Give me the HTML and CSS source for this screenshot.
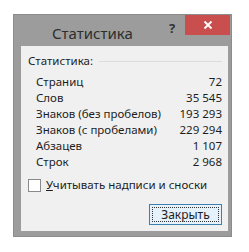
FILE: index.html
```html
<!DOCTYPE html>
<html lang="ru">
<head>
    <meta charset="utf-8">
    <title>Статистика</title>
    <link rel="stylesheet" href="styles.css">
</head>
<body>
    <div class="window">
        <!-- Заголовок окна -->
        <div class="titlebar">
            <span class="title">Статистика</span>
            <span class="help">?</span>
            <span class="close">
                <svg width="10" height="10" viewBox="0 0 10 10">
                    <path d="M1.5 1.5 L8.5 8.5 M8.5 1.5 L1.5 8.5" stroke="#fff" stroke-width="1.8"/>
                </svg>
            </span>
        </div>

        <!-- Содержимое -->
        <div class="panel">
            <div class="group-title">
                <span>Статистика:</span>
                <span class="line"></span>
            </div>

            <div class="stats">
                <div class="row"><span>Страниц</span><span>72</span></div>
                <div class="row"><span>Слов</span><span>35 545</span></div>
                <div class="row"><span>Знаков (без пробелов)</span><span>193 293</span></div>
                <div class="row"><span>Знаков (с пробелами)</span><span>229 294</span></div>
                <div class="row"><span>Абзацев</span><span>1 107</span></div>
                <div class="row"><span>Строк</span><span>2 968</span></div>
            </div>

            <label class="check">
                <span class="box"></span>
                <span><u>У</u>читывать надписи и сноски</span>
            </label>

            <div class="buttons">
                <button class="btn">Закрыть</button>
            </div>
        </div>
    </div>
</body>
</html>
```

FILE: styles.css
```css
* {
    margin: 0;
    padding: 0;
    box-sizing: border-box;
}

body {
    background-color: #ffffff;
    font-family: "Noto Sans", "Open Sans", sans-serif;
    font-size: 11.5px;
    color: #1e1e1e;
}

/* Окно */
.window {
    margin: 14px 0 0 13px;
    width: 219px;
    height: 223px;
    background-color: #9c9c9c;
    border: 1px solid #8c8c8c;
    display: flex;
    flex-direction: column;
}

.titlebar {
    height: 31px;
    display: flex;
    align-items: flex-start;
}

.title {
    margin: 8px 0 0 38px;
    font-size: 15px;
    line-height: 20px;
    color: #2e2e2e;
}

.help {
    margin: 4px 5px 0 auto;
    width: 16px;
    font-size: 13px;
    font-weight: bold;
    color: #333;
    text-align: center;
}

.close {
    margin-right: 1px;
    width: 45px;
    height: 20px;
    background-color: #c94f4f;
    display: flex;
    align-items: center;
    justify-content: center;
}

/* Панель */
.panel {
    flex: 1;
    margin: 0 3px 5px 7px;
    background-color: #f0f0f0;
    padding: 7px 6px 0 7px;
}

.group-title {
    display: flex;
    align-items: center;
    line-height: 16px;
}

.group-title .line {
    flex: 1;
    height: 1px;
    margin-left: 6px;
    background-color: #dcdcdc;
}

.stats {
    margin-top: 5px;
    padding-left: 8px;
}

.row {
    display: flex;
    justify-content: space-between;
    line-height: 16px;
}

.check {
    margin-top: 7px;
    display: flex;
    align-items: center;
    gap: 5px;
    line-height: 16px;
}

.box {
    width: 13px;
    height: 13px;
    background-color: #fff;
    border: 1px solid #8a8a8a;
}

.buttons {
    margin-top: 11px;
    display: flex;
    justify-content: flex-end;
}

.btn {
    width: 73px;
    height: 21px;
    font-family: inherit;
    font-size: 12px;
    color: #1e1e1e;
    background-color: #e5f1fb;
    border: 1px solid #3c7fb1;
    outline: 1px dotted #333;
    outline-offset: -4px;
}
```
